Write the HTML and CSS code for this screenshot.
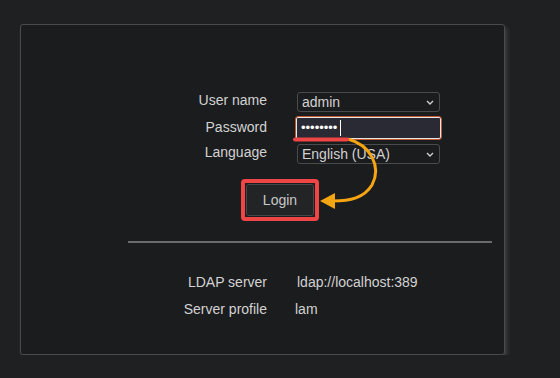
FILE: index.html
```html
<!DOCTYPE html>
<html lang="en">
<head>
    <meta charset="UTF-8">
    <meta name="viewport" content="width=device-width, initial-scale=1.0">
    <title>LDAP Account Manager - Login</title>
    <link rel="stylesheet" href="styles.css">
</head>
<body>
    <div class="page">
        <div class="login-box">
            <div class="form-grid">
                <label class="field-label" for="username">User name</label>
                <div class="select-wrap">
                    <select id="username" class="field-select">
                        <option>admin</option>
                    </select>
                    <svg class="chevron" width="8" height="5" viewBox="0 0 8 5"><path d="M1 1 L4 4 L7 1" fill="none" stroke="#cfcfcf" stroke-width="1.4"/></svg>
                </div>

                <label class="field-label pw-label" for="password">Password</label>
                <div class="pw-field" id="password">
                    <span class="pw-dots">&bull;&bull;&bull;&bull;&bull;&bull;&bull;&bull;</span><span class="caret"></span>
                </div>

                <label class="field-label" for="language">Language</label>
                <div class="select-wrap">
                    <select id="language" class="field-select">
                        <option>English (USA)</option>
                    </select>
                    <svg class="chevron" width="8" height="5" viewBox="0 0 8 5"><path d="M1 1 L4 4 L7 1" fill="none" stroke="#cfcfcf" stroke-width="1.4"/></svg>
                </div>
            </div>

            <div class="login-row">
                <div class="highlight">
                    <button class="login-btn">Login</button>
                </div>
            </div>

            <hr class="divider">

            <div class="info-grid">
                <div class="info-label">LDAP server</div>
                <div class="info-value">ldap://localhost:389</div>
                <div class="info-label">Server profile</div>
                <div class="info-value short">lam</div>
            </div>
        </div>
    </div>

    <!-- annotation overlay -->
    <svg class="annotation" width="560" height="378" viewBox="0 0 560 378">
        <path d="M348 139 C370 145, 382 166, 372 185 C364 198, 350 201, 333 201" fill="none" stroke="#f5a512" stroke-width="3"/>
        <polygon points="320,201 335,193 335,209" fill="#f5a512"/>
        <rect x="293" y="137.5" width="56" height="4" rx="2" fill="#f04545"/>
    </svg>
</body>
</html>
```

FILE: styles.css
```css
body {
    margin: 0;
    background: #1f2022;
    font-family: "Liberation Sans", Arial, sans-serif;
    font-size: 14px;
    color: #d2d2d2;
}
.page {
    padding: 24px 0 0 20px;
}
.login-box {
    width: 483px;
    height: 329px;
    background: #1b1c1e;
    border: 1px solid #4a4b4d;
    border-radius: 3px;
    box-shadow: 2px 3px 4px #3f4347;
}
.form-grid {
    display: grid;
    grid-template-columns: 246px 145px;
    grid-template-rows: 20px 24px 20px;
    column-gap: 28px;
    row-gap: 4px;
    margin-top: 67px;
}
.field-label {
    text-align: right;
    line-height: 16px;
}
.pw-label {
    padding-top: 3px;
}
.select-wrap {
    position: relative;
    margin-left: 2px;
    width: 143px;
}
.field-select {
    appearance: none;
    -webkit-appearance: none;
    width: 143px;
    height: 20px;
    margin: 0;
    padding: 0 16px 0 4px;
    background: #1b1c1e;
    color: #d2d2d2;
    border: 1px solid #4a4b4d;
    border-radius: 3px;
    font-family: "Liberation Sans", Arial, sans-serif;
    font-size: 14px;
    line-height: 18px;
    outline: none;
}
.chevron {
    position: absolute;
    right: 6px;
    top: 8px;
}
.pw-field {
    display: flex;
    align-items: center;
    width: 147px;
    height: 24px;
    box-sizing: border-box;
    padding-left: 5px;
    background: #2a2a35;
    border: 1px solid #c4572f;
    border-radius: 3px;
    box-shadow: inset 0 0 0 1px #e6e6e6;
}
.pw-dots {
    color: #ffffff;
    font-size: 13px;
    line-height: 16px;
}
.caret {
    display: inline-block;
    width: 1px;
    height: 16px;
    margin-left: 3px;
    background: #ffffff;
}
.login-row {
    margin-top: 15px;
    padding-left: 220px;
}
.highlight {
    display: inline-block;
    border: 4px solid #f04545;
    border-radius: 4px;
    padding: 1px;
}
.login-btn {
    display: block;
    width: 68px;
    height: 32px;
    background: #222426;
    color: #c9c9c9;
    border: 1px solid #45474a;
    border-radius: 3px;
    font-family: "Liberation Sans", Arial, sans-serif;
    font-size: 14px;
    cursor: pointer;
}
.divider {
    width: 364px;
    height: 2px;
    margin: 20px 0 0 107px;
    border: none;
    background: #6b6b6b;
}
.info-grid {
    display: grid;
    grid-template-columns: 246px auto;
    column-gap: 30px;
    grid-auto-rows: 27px;
    margin-top: 26px;
    line-height: 27px;
}
.info-label {
    text-align: right;
}
.info-value.short {
    margin-left: -2px;
}
.annotation {
    position: absolute;
    left: 0;
    top: 0;
    pointer-events: none;
}
```
